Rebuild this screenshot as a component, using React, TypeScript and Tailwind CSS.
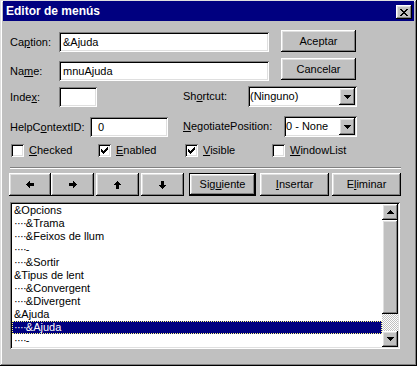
import React from "react";

const RAISED =
  "shadow-[inset_-1px_-1px_#000,inset_1px_1px_#fff,inset_-2px_-2px_#808080,inset_2px_2px_#dfdfdf]";
const SUNKEN =
  "shadow-[inset_1px_1px_#808080,inset_-1px_-1px_#fff,inset_2px_2px_#000,inset_-2px_-2px_#dfdfdf]";

function Pix({ rows }: { rows: string[] }) {
  const w = rows[0].length;
  const h = rows.length;
  const rects: React.ReactNode[] = [];
  rows.forEach((r, y) => {
    for (let x = 0; x < w; x++) {
      if (r[x] === "X") rects.push(<rect key={`${x}-${y}`} x={x} y={y} width={1} height={1} />);
    }
  });
  return (
    <svg width={w} height={h} viewBox={`0 0 ${w} ${h}`} shapeRendering="crispEdges" fill="currentColor" className="block">
      {rects}
    </svg>
  );
}

const CLOSE_X = ["XX....XX", ".XX..XX.", "..XXXX..", "...XX...", "..XXXX..", ".XX..XX.", "XX....XX"];
const LEFT = ["...X....", "..XX....", ".XXXXXXX", "XXXXXXXX", ".XXXXXXX", "..XX....", "...X...."];
const RIGHT = ["....X...", "....XX..", "XXXXXXX.", "XXXXXXXX", "XXXXXXX.", "....XX..", "....X..."];
const UP = ["...X...", "..XXX..", ".XXXXX.", "XXXXXXX", "..XXX..", "..XXX..", "..XXX..", "..XXX.."];
const DOWN = [...UP].reverse();
const TRI_DOWN = ["XXXXXXX", ".XXXXX.", "..XXX..", "...X..."];
const TRI_UP = [...TRI_DOWN].reverse();
const CHECK = ["......X", ".....XX", "X...XXX", "XX.XXX.", "XXXXX..", ".XXX...", "..X...."];

function TextBox({ className, children }: { className: string; children?: React.ReactNode }) {
  return <div className={`bg-white ${SUNKEN} flex items-center whitespace-nowrap ${className}`}>{children}</div>;
}

function Combo({ className, text }: { className: string; text: string }) {
  return (
    <div className={`bg-white ${SUNKEN} flex items-stretch p-[2px] ${className}`}>
      <div className="flex-1 flex items-center whitespace-nowrap">{text}</div>
      <div className={`w-[16px] bg-[#c0c0c0] ${RAISED} flex items-center justify-center`}>
        <Pix rows={TRI_DOWN} />
      </div>
    </div>
  );
}

function Check({ label, checked }: { label: React.ReactNode; checked: boolean }) {
  return (
    <div className="w-[87px] flex items-center gap-[5px]">
      <div className={`w-[13px] h-[13px] bg-white ${SUNKEN} flex items-center justify-center`}>
        {checked && <Pix rows={CHECK} />}
      </div>
      <span className="whitespace-nowrap">{label}</span>
    </div>
  );
}

function Btn({ className, children }: { className: string; children: React.ReactNode }) {
  return (
    <div className={`bg-[#c0c0c0] ${RAISED} flex items-center justify-center whitespace-nowrap ${className}`}>
      {children}
    </div>
  );
}

const items: { t: string; d: boolean; sel?: boolean }[] = [
  { t: "&Opcions", d: false },
  { t: "&Trama", d: true },
  { t: "&Feixos de llum", d: true },
  { t: "-", d: true },
  { t: "&Sortir", d: true },
  { t: "&Tipus de lent", d: false },
  { t: "&Convergent", d: true },
  { t: "&Divergent", d: true },
  { t: "&Ajuda", d: false },
  { t: "&Ajuda", d: true, sel: true },
  { t: "-", d: true },
];

export default function App() {
  return (
    <div className="w-[417px] h-[366px] bg-[#c0c0c0] overflow-hidden text-[11px] leading-[13px] text-black font-['Liberation_Sans',Arial,sans-serif] shadow-[inset_-1px_-1px_#000,inset_1px_1px_#dfdfdf,inset_-2px_-2px_#808080,inset_2px_2px_#fff] pt-[1px] px-[3px]">
      {/* Title bar */}
      <div className="h-[20px] bg-[#000080] flex items-center justify-between">
        <span className="pl-[3px] text-white font-bold text-[12px] leading-[14px]">Editor de menús</span>
        <div className={`self-start mt-[4px] mr-[2px] w-[16px] h-[14px] bg-[#c0c0c0] ${RAISED} flex items-center justify-center`}>
          <Pix rows={CLOSE_X} />
        </div>
      </div>

      {/* Row 1 */}
      <div className="mt-[9px] ml-[7px] flex items-start h-[22px]">
        <div className="w-[49px] h-[20px] mt-[2px] flex items-center">
          Ca<u>p</u>tion:
        </div>
        <TextBox className="w-[210px] h-[20px] mt-[2px] pl-[4px]">&amp;Ajuda</TextBox>
        <Btn className="ml-[12px] w-[75px] h-[22px]">Aceptar</Btn>
      </div>

      {/* Row 2 */}
      <div className="mt-[6px] ml-[7px] flex items-start h-[22px]">
        <div className="w-[49px] h-[20px] mt-[3px] flex items-center">
          Na<u>m</u>e:
        </div>
        <TextBox className="w-[210px] h-[20px] mt-[3px] pl-[4px]">mnuAjuda</TextBox>
        <Btn className="ml-[12px] w-[75px] h-[22px]">Cancelar</Btn>
      </div>

      {/* Row 3 */}
      <div className="mt-[5px] ml-[7px] flex items-start h-[22px]">
        <div className="w-[49px] h-[20px] mt-[2px] flex items-center">
          Inde<u>x</u>:
        </div>
        <TextBox className="w-[38px] h-[20px] mt-[2px]" />
        <div className="ml-[86px] w-[65px] h-[21px] mt-[1px] flex items-center whitespace-nowrap">
          Sh<u>o</u>rtcut:
        </div>
        <Combo className="w-[109px] h-[21px] mt-[1px]" text="(Ninguno)" />
      </div>

      {/* Row 4 */}
      <div className="mt-[9px] ml-[7px] flex items-start h-[21px]">
        <div className="w-[80px] h-[20px] mt-[1px] flex items-center whitespace-nowrap">
          HelpC<u>o</u>ntextID:
        </div>
        <TextBox className="w-[78px] h-[20px] mt-[1px] pl-[8px]">0</TextBox>
        <div className="ml-[15px] w-[101px] h-[21px] flex items-center whitespace-nowrap">
          <u>N</u>egotiatePosition:
        </div>
        <Combo className="w-[73px] h-[21px]" text="0 - None" />
      </div>

      {/* Checkboxes */}
      <div className="mt-[7px] ml-[8px] flex h-[13px]">
        <Check label={<><u>C</u>hecked</>} checked={false} />
        <Check label={<><u>E</u>nabled</>} checked={true} />
        <Check label={<><u>V</u>isible</>} checked={true} />
        <Check label={<><u>W</u>indowList</>} checked={false} />
      </div>

      {/* Separator */}
      <div className="mt-[10px] ml-[7px] w-[391px] h-[2px] border-t border-t-[#808080] border-b border-b-white" />

      {/* Buttons row */}
      <div className="mt-[4px] ml-[6px] flex h-[23px]">
        <Btn className="w-[42px] h-[23px]"><Pix rows={LEFT} /></Btn>
        <Btn className="w-[43px] h-[23px]"><Pix rows={RIGHT} /></Btn>
        <Btn className="ml-[2px] w-[43px] h-[23px]"><Pix rows={UP} /></Btn>
        <Btn className="ml-[2px] w-[43px] h-[23px]"><Pix rows={DOWN} /></Btn>
        <div className="ml-[5px] w-[67px] h-[23px] border border-black">
          <Btn className="w-full h-full">
            Sig<u>u</u>iente
          </Btn>
        </div>
        <Btn className="ml-[4px] w-[69px] h-[23px]">
          <u>I</u>nsertar
        </Btn>
        <Btn className="ml-[3px] w-[69px] h-[23px]">
          E<u>l</u>iminar
        </Btn>
      </div>

      {/* List */}
      <div className={`mt-[6px] ml-[7px] w-[390px] h-[147px] bg-white ${SUNKEN} p-[2px]`}>
        <div className="flex h-[143px]">
          <div className="flex-1 overflow-hidden">
            {items.map((it, i) => (
              <div
                key={i}
                className={
                  it.sel
                    ? "h-[13px] pl-[2px] whitespace-nowrap bg-[#000080] text-white outline outline-1 outline-dotted outline-[#ffff80] outline-offset-[-1px]"
                    : "h-[13px] pl-[2px] whitespace-nowrap"
                }
              >
                {it.d && <span className="tracking-[-0.7px]">····</span>}
                {it.t}
              </div>
            ))}
          </div>
          <div className="w-[16px] flex flex-col">
            <Btn className="w-[16px] h-[16px]"><Pix rows={TRI_UP} /></Btn>
            <div className={`w-[16px] h-[94px] bg-[#c0c0c0] ${RAISED}`} />
            <div className="w-[16px] h-[17px] bg-[image:repeating-conic-gradient(#fff_0%_25%,#c0c0c0_0%_50%)] bg-[length:2px_2px]" />
            <Btn className="w-[16px] h-[16px]"><Pix rows={TRI_DOWN} /></Btn>
          </div>
        </div>
      </div>
    </div>
  );
}
